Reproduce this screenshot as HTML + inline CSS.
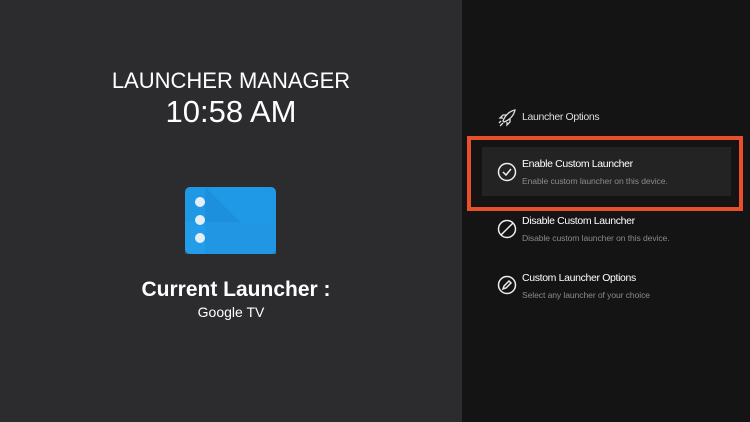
<!DOCTYPE html>
<html><head><style>
body{margin:0;width:750px;height:422px;overflow:hidden;font-family:"Liberation Sans",sans-serif;position:relative;background:#141414}
.l{position:absolute;left:0;top:0;width:462px;height:422px;background:#2c2c2e}
.r{position:absolute;left:462px;top:0;width:288px;height:422px;background:#141414}
.t{position:absolute;color:#fff;white-space:nowrap}
.m{font-size:10.5px;letter-spacing:-0.35px}
.ic{position:absolute}
.s{color:#8a8a8a;font-size:8.6px;letter-spacing:-0.1px}
</style></head><body>
<div class="l"></div><div class="r"></div>
<div class="t" style="left:0;width:462px;text-align:center;top:68px;font-size:22px">LAUNCHER MANAGER</div>
<div class="t" style="left:0;width:462px;text-align:center;top:94px;font-size:31px">10:58 AM</div>
<svg class="ic" style="left:185px;top:187px" width="91" height="67" viewBox="0 0 91 67">
<rect width="91" height="67" rx="5" fill="#1f98e6"/>
<path d="M20 0L55 35H91V67H20Z" fill="#1a8ad6" opacity=".6"/>
<path d="M0 35H91V67H0Z" fill="#2aa3ee" opacity=".35"/>
<circle cx="15" cy="15" r="5" fill="#e6eef5"/><circle cx="15" cy="33" r="5" fill="#e6eef5"/><circle cx="15" cy="51" r="5" fill="#e6eef5"/>
</svg>
<div class="t" style="left:0;width:472px;text-align:center;top:278px;font-size:21px;font-weight:bold">Current Launcher :</div>
<div class="t" style="left:0;width:462px;text-align:center;top:304px;font-size:14px">Google TV</div>

<svg class="ic" style="left:497px;top:108px" width="20" height="20" viewBox="0 0 20 20" fill="none" stroke="#ddd" stroke-width="1.3"><path d="M6 13C8 7 13 3 18 2C17 7 13 12 7 14Z M6 10L3 10L6 7L9 7 M10 14L10 17L13 14L13 11 M2 15L4 13 M3 18L6 15"/></svg>
<div class="t m" style="left:522px;top:111px;color:#ddd">Launcher Options</div>

<div style="position:absolute;left:467px;top:136px;width:268px;height:67px;border:4px solid #e7502a"></div>
<div style="position:absolute;left:482px;top:147px;width:249px;height:49px;background:#232323"></div>
<svg class="ic" style="left:497px;top:162px" width="20" height="20" viewBox="0 0 20 20" fill="none" stroke="#eee" stroke-width="1.5"><circle cx="10" cy="10" r="8.5"/><path d="M6 10L9 13L14 7"/></svg>
<div class="t m" style="left:522px;top:158px">Enable Custom Launcher</div>
<div class="t s" style="left:522px;top:176px">Enable custom launcher on this device.</div>

<svg class="ic" style="left:497px;top:219px" width="20" height="20" viewBox="0 0 20 20" fill="none" stroke="#eee" stroke-width="1.5"><circle cx="10" cy="10" r="8.5"/><path d="M4 16L16 4"/></svg>
<div class="t m" style="left:522px;top:215px">Disable Custom Launcher</div>
<div class="t s" style="left:522px;top:233px">Disable custom launcher on this device.</div>

<svg class="ic" style="left:497px;top:275px" width="20" height="20" viewBox="0 0 20 20" fill="none" stroke="#eee" stroke-width="1.5"><circle cx="10" cy="10" r="8.5"/><path d="M6 14L7 11L12 6L14 8L9 13Z"/></svg>
<div class="t m" style="left:522px;top:272px">Custom Launcher Options</div>
<div class="t s" style="left:522px;top:290px">Select any launcher of your choice</div>
</body></html>
